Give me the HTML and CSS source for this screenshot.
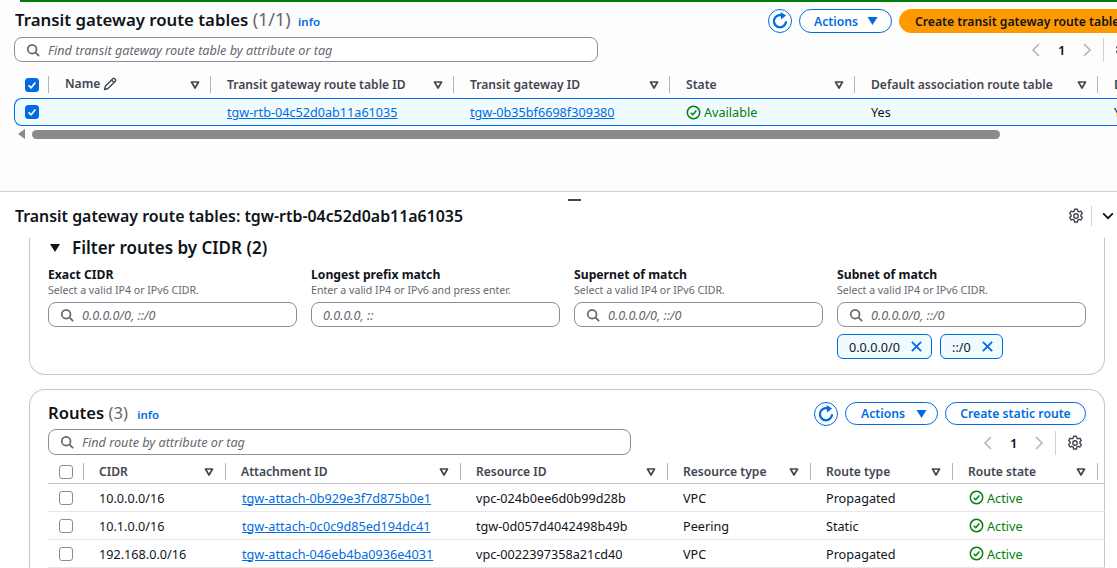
FILE: index.html
```html
<!DOCTYPE html>
<html lang="en">

<head>
    <meta charset="UTF-8">
    <meta name="viewport" content="width=device-width, initial-scale=1.0">
    <title>Transit gateway route tables</title>
    <link rel="stylesheet" href="styles.css">
</head>

<body>
    <svg class="sprites" xmlns="http://www.w3.org/2000/svg">
        <symbol id="i-search" viewBox="0 0 16 16"><circle cx="7" cy="7" r="5" fill="none" stroke="currentColor" stroke-width="2"/><path d="M10.7 10.7 15 15" fill="none" stroke="currentColor" stroke-width="2"/></symbol>
        <symbol id="i-refresh" viewBox="0 0 16 16"><path d="M13.4 8.2A5.4 5.4 0 1 1 9.6 3" fill="none" stroke="currentColor" stroke-width="2"/><path d="M8.4 0 13.4 3.1 9 6.6Z" fill="currentColor"/></symbol>
        <symbol id="i-sort" viewBox="0 0 10 10"><path d="M1.5 2h7L5 8Z" fill="none" stroke="currentColor" stroke-width="1.7" stroke-linejoin="round"/></symbol>
        <symbol id="i-caret" viewBox="0 0 10 8"><path d="M0 0h10L5 8Z" fill="currentColor"/></symbol>
        <symbol id="i-check" viewBox="0 0 14 14"><path d="M3 7.4 5.9 10.2 11 4" fill="none" stroke="currentColor" stroke-width="2"/></symbol>
        <symbol id="i-ok" viewBox="0 0 16 16"><circle cx="8" cy="8" r="6.6" fill="none" stroke="currentColor" stroke-width="1.6"/><path d="M5 8.2 7.2 10.4 11 5.8" fill="none" stroke="currentColor" stroke-width="1.6"/></symbol>
        <symbol id="i-left" viewBox="0 0 10 16"><path d="M8 2 2 8l6 6" fill="none" stroke="currentColor" stroke-width="1.6"/></symbol>
        <symbol id="i-right" viewBox="0 0 10 16"><path d="M2 2l6 6-6 6" fill="none" stroke="currentColor" stroke-width="1.6"/></symbol>
        <symbol id="i-down" viewBox="0 0 16 16"><path d="M2.5 5 8 10.5 13.5 5" fill="none" stroke="currentColor" stroke-width="2"/></symbol>
        <symbol id="i-x" viewBox="0 0 14 14"><path d="M2 2l10 10M12 2 2 12" fill="none" stroke="currentColor" stroke-width="1.9"/></symbol>
        <symbol id="i-pencil" viewBox="0 0 14 14"><path d="M1.5 12.5 2.5 9 9.8 1.7a1.3 1.3 0 0 1 1.9 0l.6.6a1.3 1.3 0 0 1 0 1.9L5 11.5ZM8.6 3l2.4 2.4" fill="none" stroke="currentColor" stroke-width="1.4" stroke-linejoin="round"/></symbol>
        <symbol id="i-gear" viewBox="0 0 16 16"><path d="M6.6 1.2h2.8l.4 1.9 1.3.7 1.8-.6 1.4 2.4-1.4 1.3v1.4l1.4 1.3-1.4 2.4-1.8-.6-1.3.7-.4 1.9H6.6l-.4-1.9-1.3-.7-1.8.6-1.4-2.4 1.4-1.3V6.9L1.7 5.6l1.4-2.4 1.8.6 1.3-.7Z" fill="none" stroke="currentColor" stroke-width="1.4" stroke-linejoin="round"/><circle cx="8" cy="8" r="2.2" fill="none" stroke="currentColor" stroke-width="1.4"/></symbol>
    </svg>

    <div class="flash-bar"></div>

    <section class="top-pane">
        <div class="title-row">
            <h1 class="page-title">Transit gateway route tables <span class="count">(1/1)</span> <a class="info">info</a></h1>
            <div class="actions">
                <button class="btn-round"><svg class="icon-refresh"><use href="#i-refresh"/></svg></button>
                <button class="btn btn-actions">Actions <svg class="icon-caret"><use href="#i-caret"/></svg></button>
                <button class="btn btn-primary">Create transit gateway route table</button>
            </div>
        </div>

        <div class="search-row">
            <div class="search search-top">
                <svg class="icon-search"><use href="#i-search"/></svg>
                <span class="placeholder">Find transit gateway route table by attribute or tag</span>
            </div>
            <div class="pager pager-top">
                <svg class="icon-chev"><use href="#i-left"/></svg>
                <b>1</b>
                <svg class="icon-chev"><use href="#i-right"/></svg>
                <span class="pager-sep"></span>
                <svg class="icon-gear"><use href="#i-gear"/></svg>
            </div>
        </div>

        <div class="grid grid-top head-top">
            <div class="th th-check"><span class="check checked"><svg><use href="#i-check"/></svg></span></div>
            <div class="th"><span>Name <svg class="icon-pencil"><use href="#i-pencil"/></svg></span><svg class="icon-sort"><use href="#i-sort"/></svg></div>
            <div class="th"><span>Transit gateway route table ID</span><svg class="icon-sort"><use href="#i-sort"/></svg></div>
            <div class="th"><span>Transit gateway ID</span><svg class="icon-sort"><use href="#i-sort"/></svg></div>
            <div class="th"><span>State</span><svg class="icon-sort"><use href="#i-sort"/></svg></div>
            <div class="th"><span>Default association route table</span><svg class="icon-sort"><use href="#i-sort"/></svg></div>
            <div class="th"><span>Default propagation</span></div>
        </div>
        <div class="grid grid-top row-selected">
            <div class="td td-check"><span class="check checked"><svg><use href="#i-check"/></svg></span></div>
            <div class="td"></div>
            <div class="td"><a class="link">tgw-rtb-04c52d0ab11a61035</a></div>
            <div class="td"><a class="link">tgw-0b35bf6698f309380</a></div>
            <div class="td status"><svg class="icon-ok"><use href="#i-ok"/></svg>Available</div>
            <div class="td">Yes</div>
            <div class="td">Yes</div>
        </div>

        <div class="scrollbar">
            <span class="scroll-arrow"></span>
            <span class="scroll-thumb"></span>
        </div>
    </section>

    <section class="detail-pane">
        <div class="drag-handle"></div>
        <div class="detail-head">
            <h2 class="detail-title">Transit gateway route tables: tgw-rtb-04c52d0ab11a61035</h2>
            <svg class="icon-gear"><use href="#i-gear"/></svg>
            <span class="detail-sep"></span>
            <svg class="icon-down"><use href="#i-down"/></svg>
        </div>

        <div class="card filter-card">
            <h3 class="filter-title"><svg class="icon-caret-dark"><use href="#i-caret"/></svg>Filter routes by CIDR (2)</h3>
            <div class="filter-fields">
                <div class="field">
                    <label>Exact CIDR</label>
                    <p>Select a valid IP4 or IPv6 CIDR.</p>
                    <div class="search"><svg class="icon-search"><use href="#i-search"/></svg><span class="placeholder">0.0.0.0/0, ::/0</span></div>
                </div>
                <div class="field">
                    <label>Longest prefix match</label>
                    <p>Enter a valid IP4 or IPv6 and press enter.</p>
                    <div class="search"><span class="placeholder">0.0.0.0, ::</span></div>
                </div>
                <div class="field">
                    <label>Supernet of match</label>
                    <p>Select a valid IP4 or IPv6 CIDR.</p>
                    <div class="search"><svg class="icon-search"><use href="#i-search"/></svg><span class="placeholder">0.0.0.0/0, ::/0</span></div>
                </div>
                <div class="field">
                    <label>Subnet of match</label>
                    <p>Select a valid IP4 or IPv6 CIDR.</p>
                    <div class="search"><svg class="icon-search"><use href="#i-search"/></svg><span class="placeholder">0.0.0.0/0, ::/0</span></div>
                    <div class="chips">
                        <span class="chip">0.0.0.0/0 <svg class="icon-x"><use href="#i-x"/></svg></span>
                        <span class="chip">::/0 <svg class="icon-x"><use href="#i-x"/></svg></span>
                    </div>
                </div>
            </div>
        </div>

        <div class="card routes-card">
            <div class="routes-head">
                <h3 class="routes-title">Routes <span class="count">(3)</span> <a class="info">info</a></h3>
                <div class="actions">
                    <button class="btn-round"><svg class="icon-refresh"><use href="#i-refresh"/></svg></button>
                    <button class="btn btn-actions btn-actions-routes">Actions <svg class="icon-caret"><use href="#i-caret"/></svg></button>
                    <button class="btn btn-static">Create static route</button>
                </div>
            </div>
            <div class="search-row routes-search">
                <div class="search search-routes">
                    <svg class="icon-search"><use href="#i-search"/></svg>
                    <span class="placeholder">Find route by attribute or tag</span>
                </div>
                <div class="pager pager-routes">
                    <svg class="icon-chev"><use href="#i-left"/></svg>
                    <b>1</b>
                    <svg class="icon-chev"><use href="#i-right"/></svg>
                    <span class="pager-sep"></span>
                    <svg class="icon-gear"><use href="#i-gear"/></svg>
                </div>
            </div>

            <div class="grid grid-routes head-routes">
                <div class="th th-check"><span class="check"></span></div>
                <div class="th"><span>CIDR</span><svg class="icon-sort"><use href="#i-sort"/></svg></div>
                <div class="th"><span>Attachment ID</span><svg class="icon-sort"><use href="#i-sort"/></svg></div>
                <div class="th"><span>Resource ID</span><svg class="icon-sort"><use href="#i-sort"/></svg></div>
                <div class="th"><span>Resource type</span><svg class="icon-sort"><use href="#i-sort"/></svg></div>
                <div class="th"><span>Route type</span><svg class="icon-sort"><use href="#i-sort"/></svg></div>
                <div class="th"><span>Route state</span><svg class="icon-sort"><use href="#i-sort"/></svg></div>
            </div>
            <div class="grid grid-routes row">
                <div class="td td-check"><span class="check"></span></div>
                <div class="td">10.0.0.0/16</div>
                <div class="td"><a class="link">tgw-attach-0b929e3f7d875b0e1</a></div>
                <div class="td">vpc-024b0ee6d0b99d28b</div>
                <div class="td">VPC</div>
                <div class="td">Propagated</div>
                <div class="td status"><svg class="icon-ok"><use href="#i-ok"/></svg>Active</div>
            </div>
            <div class="grid grid-routes row">
                <div class="td td-check"><span class="check"></span></div>
                <div class="td">10.1.0.0/16</div>
                <div class="td"><a class="link">tgw-attach-0c0c9d85ed194dc41</a></div>
                <div class="td">tgw-0d057d4042498b49b</div>
                <div class="td">Peering</div>
                <div class="td">Static</div>
                <div class="td status"><svg class="icon-ok"><use href="#i-ok"/></svg>Active</div>
            </div>
            <div class="grid grid-routes row">
                <div class="td td-check"><span class="check"></span></div>
                <div class="td">192.168.0.0/16</div>
                <div class="td"><a class="link">tgw-attach-046eb4ba0936e4031</a></div>
                <div class="td">vpc-0022397358a21cd40</div>
                <div class="td">VPC</div>
                <div class="td">Propagated</div>
                <div class="td status"><svg class="icon-ok"><use href="#i-ok"/></svg>Active</div>
            </div>
        </div>
    </section>
</body>

</html>
```

FILE: styles.css
```css
html {
    overflow: hidden;
}

body {
    font-family: "Noto Sans", Arial, sans-serif;
    font-size: 12.65px;
    line-height: 16px;
    margin: 0;
    width: 1117px;
    height: 568px;
    overflow: hidden;
    background-color: #fff;
    color: #0f141a;
}

.sprites {
    display: none;
}

h1,
h2,
h3,
p {
    margin: 0;
}

svg {
    display: block;
    flex: none;
}

/* top pane */
.flash-bar {
    height: 2px;
    margin-left: 20px;
    background-color: #037f0c;
    box-shadow: 0 2px 6px rgba(0, 0, 0, 0.16);
}

.top-pane {
    height: 189px;
    padding-left: 14px;
    background-color: #fdfdfd;
    border-bottom: 1px solid #d0d0d4;
    overflow: hidden;
}

.title-row {
    display: flex;
    height: 25px;
    padding-top: 7px;
}

.page-title {
    flex: none;
    width: 753px;
    margin: -2px 0 0 1px;
    font-size: 16.8px;
    line-height: 24px;
    font-weight: 600;
}

.count {
    font-size: 18px;
    font-weight: 400;
    color: #656871;
}

.info {
    font-size: 11.5px;
    font-weight: 600;
    color: #006ce0;
    margin-left: 3px;
}

.actions {
    display: flex;
    flex: none;
    gap: 7px;
}

.btn-round {
    width: 24px;
    height: 24px;
    padding: 0;
    border: 1px solid #006ce0;
    border-radius: 50%;
    background: #fff;
    color: #006ce0;
    display: flex;
    align-items: center;
    justify-content: center;
}

.icon-refresh {
    width: 18px;
    height: 18px;
}

.btn {
    font-family: inherit;
    font-size: 12.2px;
    font-weight: 600;
    height: 24px;
    padding: 0 14px;
    border: 1px solid #006ce0;
    border-radius: 12px;
    background: #fff;
    color: #006ce0;
    display: flex;
    align-items: center;
    white-space: nowrap;
}

.btn-actions {
    width: 93px;
    gap: 9px;
}

.btn-actions-routes {
    gap: 11px;
    padding: 0 15px;
}

.icon-caret {
    width: 11px;
    height: 8px;
}

.btn-primary {
    padding: 0 15px;
    background-color: #ff9900;
    border-color: #ff9900;
    color: #0f141a;
}

.search-row {
    display: flex;
    align-items: center;
}

.search {
    display: flex;
    align-items: center;
    box-sizing: border-box;
    height: 25px;
    padding-left: 11px;
    background: #fff;
    border: 1px solid #8c8c94;
    border-radius: 8px;
    font-size: 12.65px;
}

.search-top {
    flex: none;
    width: 584px;
    margin-top: 3px;
}

.icon-search {
    width: 14px;
    height: 14px;
    margin-right: 8px;
    color: #656871;
}

.placeholder {
    font-style: italic;
    color: #656871;
}

.pager {
    display: flex;
    align-items: center;
    flex: none;
    gap: 17px;
    font-size: 13px;
}

.pager b {
    font-weight: 600;
}

.icon-chev {
    width: 10px;
    height: 16px;
    color: #b4b4bb;
}

.pager-sep {
    width: 1px;
    height: 24px;
    margin-left: -6px;
    background-color: #d0d0d4;
}

.pager .icon-gear {
    margin-left: -6px;
}

.pager-top {
    margin-left: 433px;
    margin-top: 3px;
}

.icon-gear {
    width: 16px;
    height: 16px;
    color: #424650;
}

/* tables */
.grid {
    display: grid;
    align-items: center;
}

.grid-top {
    grid-template-columns: 35px 162px 243px 216px 185px 243px 200px;
    width: 1284px;
}

.grid-routes {
    grid-template-columns: 36px 142px 235px 207px 143px 142px 145px;
    width: 1057px;
}

.th {
    display: flex;
    align-items: center;
    justify-content: space-between;
    height: 17px;
    padding: 0 10px 0 16px;
    border-right: 1px solid #b4b4bb;
    font-size: 12.1px;
    font-weight: 600;
    color: #424650;
    white-space: nowrap;
}

.head-top .th:last-child {
    border-right: none;
}

.grid-routes .th {
    padding: 0 11px 0 15px;
}

.grid .th-check {
    padding: 0 0 0 11px;
    justify-content: flex-start;
}

.grid-top .th:nth-child(2) span {
    display: flex;
    gap: 3px;
    align-items: center;
    margin-top: -2px;
}

.icon-sort {
    width: 10px;
    height: 10px;
    color: #424650;
}

.icon-pencil {
    width: 14px;
    height: 14px;
    color: #424650;
}

.td {
    padding: 0 0 0 15px;
    white-space: nowrap;
}

.grid-routes .td-check {
    padding-left: 11px;
}

.grid-routes .status,
.grid-routes .td:nth-child(3) {
    padding-left: 16px;
}

.row-selected .td-check {
    padding-left: 10px;
}

.head-top {
    margin-top: 14px;
    padding-bottom: 5px;
}

.row-selected {
    box-sizing: border-box;
    height: 28px;
    background-color: #f0fbff;
    border: 1px solid #006ce0;
    border-right: none;
    border-radius: 8px 0 0 8px;
}

.check {
    display: block;
    box-sizing: border-box;
    width: 14px;
    height: 14px;
    background: #fff;
    border: 1px solid #8c8c94;
    border-radius: 3px;
}

.check.checked {
    background-color: #006ce0;
    border-color: #006ce0;
    color: #fff;
}

.check svg {
    width: 12px;
    height: 12px;
}

.link {
    color: #006ce0;
    text-decoration: underline;
}

.status {
    display: flex;
    align-items: center;
    gap: 3px;
    color: #037f0c;
}

.icon-ok {
    width: 15px;
    height: 15px;
}

.scrollbar {
    display: flex;
    align-items: center;
    gap: 7px;
    margin-top: 3px;
    margin-left: 4px;
}

.scroll-arrow {
    width: 0;
    height: 0;
    border-top: 5px solid transparent;
    border-bottom: 5px solid transparent;
    border-right: 7px solid #8a8a8a;
}

.scroll-thumb {
    width: 968px;
    height: 9px;
    border-radius: 5px;
    background-color: #8a8a8a;
}

/* detail pane */
.detail-pane {
    position: relative;
}

.drag-handle {
    position: absolute;
    left: 568px;
    top: 7px;
    width: 13px;
    height: 2px;
    background-color: #424650;
}

.detail-head {
    display: flex;
    align-items: center;
    height: 48px;
    padding-left: 15px;
}

.detail-title {
    flex: none;
    width: 1053px;
    font-size: 15.9px;
    line-height: 20px;
    font-weight: 600;
}

.detail-sep {
    width: 1px;
    height: 20px;
    margin: 0 9px 0 7px;
    background-color: #d0d0d4;
}

.icon-down {
    width: 14px;
    height: 14px;
}

.card {
    box-sizing: border-box;
    width: 1076px;
    margin-left: 29px;
    padding: 0 0 0 18px;
    border: 1px solid #c6c6cd;
}

.filter-card {
    height: 137px;
    border-top: none;
    border-radius: 0 0 16px 16px;
}

.filter-title {
    display: flex;
    align-items: center;
    gap: 11px;
    margin: -2px 0 0 1px;
    font-size: 17px;
    line-height: 20px;
    font-weight: 600;
}

.icon-caret-dark {
    width: 12px;
    height: 8px;
}

.filter-fields {
    display: flex;
    gap: 14px;
    margin-top: 9px;
}

.field {
    width: 249px;
}

.field label {
    display: block;
    font-size: 12.2px;
    font-weight: 700;
    line-height: 16px;
}

.field p {
    font-size: 10.6px;
    line-height: 14px;
    color: #656871;
}

.field .search {
    margin-top: 5px;
}

.chips {
    display: flex;
    gap: 8px;
    margin-top: 7px;
}

.chip {
    display: flex;
    align-items: center;
    box-sizing: border-box;
    height: 25px;
    padding: 0 8px 0 11px;
    gap: 10px;
    background-color: #f0fbff;
    border: 1px solid #006ce0;
    border-radius: 6px;
}

.icon-x {
    width: 13px;
    height: 13px;
    color: #006ce0;
}

.routes-card {
    height: 180px;
    margin-top: 14px;
    border-bottom: none;
    border-radius: 16px 16px 0 0;
}

.routes-head {
    display: flex;
    height: 39px;
}

.routes-title {
    flex: none;
    width: 766px;
    padding-top: 12px;
    font-size: 16.6px;
    line-height: 22px;
    font-weight: 600;
}

.routes-title .count {
    font-size: 16.6px;
}

.routes-title .info {
    margin-left: 5px;
}

.routes-head .actions {
    margin-top: 12px;
}

.routes-head .btn {
    height: 23px;
}

.btn-static {
    width: 141px;
    justify-content: center;
}

.search-routes {
    flex: none;
    width: 583px;
    height: 26px;
}

.pager-routes {
    margin-left: 352px;
    margin-top: 2px;
}

.routes-search {
    height: 26px;
}

.head-routes {
    box-sizing: border-box;
    height: 29px;
    padding-top: 5px;
    border-bottom: 1px solid #c6c6cd;
}

.row {
    box-sizing: border-box;
    height: 28px;
    border-bottom: 1px solid #e8e8ec;
}
```
